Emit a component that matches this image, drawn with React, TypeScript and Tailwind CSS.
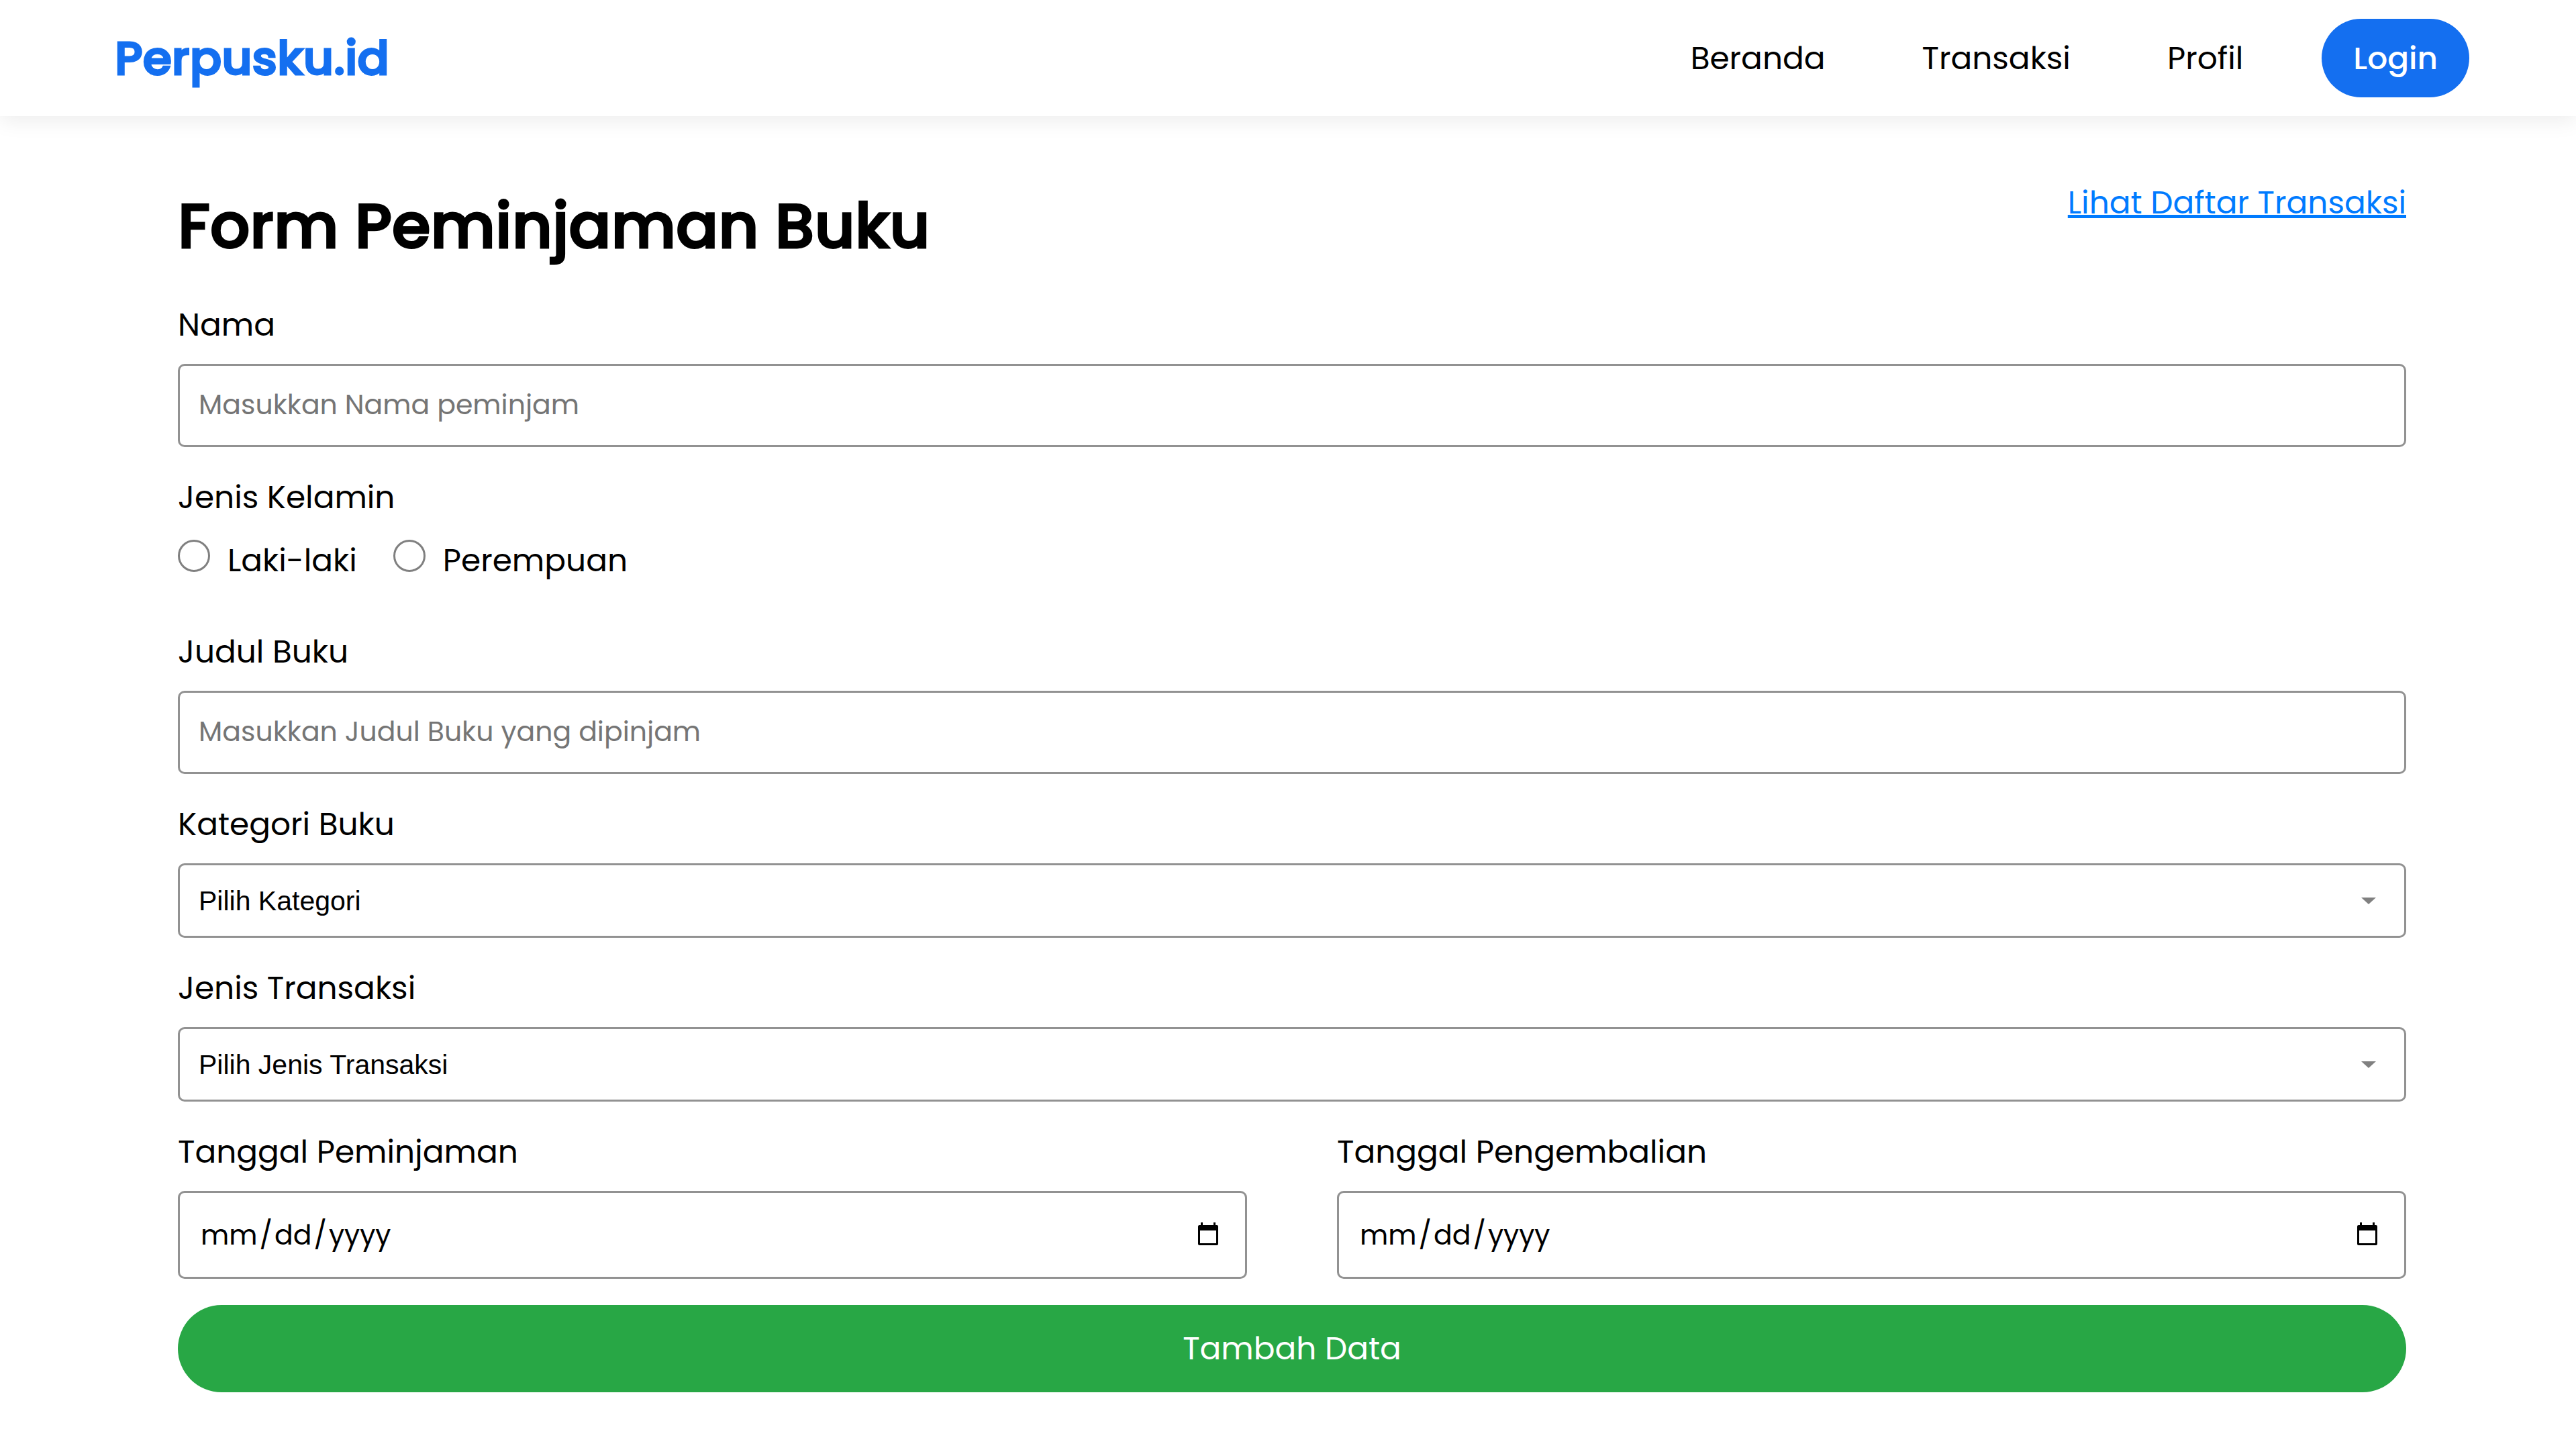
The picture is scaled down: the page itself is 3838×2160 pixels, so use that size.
import type { ReactNode } from "react";

const boxClass =
  "w-full rounded-[10px] border-[3px] border-[#929292] bg-white px-[28px] text-[41px] text-black outline-none focus:border-[#146ff0]";

const navLinks = ["Beranda", "Transaksi", "Profil"];

function Header() {
  return (
    <header className="flex h-[173px] items-center justify-between bg-white pr-[159px] pl-[171px] shadow-[0_6px_30px_rgba(0,0,0,0.08)]">
      <a
        href="#"
        className="text-[70px] leading-[104px] font-medium text-[#146ff0] [-webkit-text-stroke:3px_#146ff0]"
      >
        Perpusku.id
      </a>
      <div className="flex items-center gap-[117px]">
        <nav className="flex items-center gap-[144px]">
          {navLinks.map((name) => (
            <a key={name} href="#">
              {name}
            </a>
          ))}
        </nav>
        <button
          type="button"
          className="h-[117px] rounded-full bg-[#146ff0] px-[47px] font-medium text-white"
        >
          Login
        </button>
      </div>
    </header>
  );
}

function Field({ id, label, children }: { id: string; label: string; children: ReactNode }) {
  return (
    <div className="flex flex-1 flex-col gap-[22px]">
      <label htmlFor={id} className="self-start">
        {label}
      </label>
      {children}
    </div>
  );
}

function TextField({ id, label, placeholder }: { id: string; label: string; placeholder: string }) {
  return (
    <Field id={id} label={label}>
      <input
        id={id}
        type="text"
        placeholder={placeholder}
        className={`${boxClass} h-[124px] pb-[4px] placeholder:text-[#757575]`}
      />
    </Field>
  );
}

function SelectField({ id, label, options }: { id: string; label: string; options: string[] }) {
  return (
    <Field id={id} label={label}>
      <div className="relative">
        <select
          id={id}
          className={`${boxClass} block h-[111px] appearance-none font-['Liberation_Sans',Arial,sans-serif]`}
        >
          {options.map((option) => (
            <option key={option}>{option}</option>
          ))}
        </select>
        <svg
          viewBox="0 0 22 10"
          className="pointer-events-none absolute top-1/2 right-[45px] h-[10px] w-[22px] -translate-y-1/2"
          aria-hidden="true"
        >
          <path d="M0 0h22L11 10z" fill="#808080" />
        </svg>
      </div>
    </Field>
  );
}

function DateField({ id, label }: { id: string; label: string }) {
  return (
    <Field id={id} label={label}>
      <div className="relative">
        <input
          id={id}
          type="date"
          className={`${boxClass} block h-[131px] [&::-webkit-calendar-picker-indicator]:opacity-0 [&::-webkit-datetime-edit-day-field]:px-[3px] [&::-webkit-datetime-edit-month-field]:px-[3px] [&::-webkit-datetime-edit-year-field]:px-[3px]`}
        />
        <svg
          viewBox="0 0 32 40"
          className="pointer-events-none absolute top-1/2 right-[42px] h-[40px] w-[32px] -translate-y-1/2"
          aria-hidden="true"
        >
          <path
            fillRule="evenodd"
            fill="#000"
            d="M5 1h3v4h16V1h3v4h2a2 2 0 0 1 2 2v26a2 2 0 0 1-2 2H3a2 2 0 0 1-2-2V7a2 2 0 0 1 2-2h2zM4 13v19h24V13z"
          />
        </svg>
      </div>
    </Field>
  );
}

function Radio({ id, label }: { id: string; label: string }) {
  return (
    <div className="flex items-start gap-[26px]">
      <input
        id={id}
        type="radio"
        name="jenis-kelamin"
        className="mt-[5px] size-[48px] appearance-none rounded-full border-[3px] border-[#808080] bg-white checked:border-[14px] checked:border-[#146ff0]"
      />
      <label htmlFor={id}>{label}</label>
    </div>
  );
}

export default function App() {
  return (
    <div className="min-h-screen bg-white font-['Poppins',Inter,sans-serif] text-[47px] leading-[72px] text-black">
      <Header />
      <main className="pt-[93px] pr-[253px] pb-[84px] pl-[265px]">
        <div className="flex items-start justify-between">
          <h1 className="text-[93px] leading-[142px] font-medium [-webkit-text-stroke:3px_#000]">
            Form Peminjaman Buku
          </h1>
          <a
            href="#"
            className="text-[#007bff] underline decoration-[5px] underline-offset-[2px] [text-decoration-skip-ink:none]"
          >
            Lihat Daftar Transaksi
          </a>
        </div>
        <form className="mt-[40px] flex flex-col gap-[39px]">
          <TextField id="nama" label="Nama" placeholder="Masukkan Nama peminjam" />
          <fieldset className="mb-[25px]">
            <legend className="mb-[22px]">Jenis Kelamin</legend>
            <div className="flex gap-[54px]">
              <Radio id="laki" label="Laki-laki" />
              <Radio id="perempuan" label="Perempuan" />
            </div>
          </fieldset>
          <TextField id="judul" label="Judul Buku" placeholder="Masukkan Judul Buku yang dipinjam" />
          <SelectField id="kategori" label="Kategori Buku" options={["Pilih Kategori", "Fiksi", "Non Fiksi"]} />
          <SelectField
            id="jenis"
            label="Jenis Transaksi"
            options={["Pilih Jenis Transaksi", "Peminjaman", "Pengembalian"]}
          />
          <div className="flex gap-[134px]">
            <DateField id="pinjam" label="Tanggal Peminjaman" />
            <DateField id="kembali" label="Tanggal Pengembalian" />
          </div>
          <button type="submit" className="h-[130px] w-full rounded-full bg-[#28a745] text-white">
            Tambah Data
          </button>
        </form>
      </main>
    </div>
  );
}
